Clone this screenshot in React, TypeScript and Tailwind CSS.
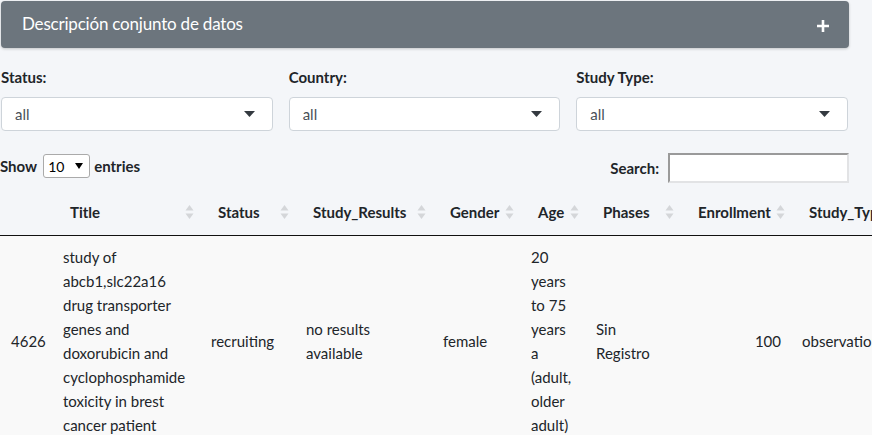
import React from 'react';

const font = { fontFamily: 'Lato, "Noto Sans", sans-serif' };

const SortIcon: React.FC = () => (
  <svg width="9" height="16" viewBox="0 0 9 16" className="absolute right-[6px] top-1/2 -translate-y-1/2">
    <path d="M4.5 1 L8.5 6.5 L0.5 6.5 Z" fill="#d4d6d9" />
    <path d="M4.5 15 L8.5 9.5 L0.5 9.5 Z" fill="#d4d6d9" />
  </svg>
);

const Caret: React.FC = () => (
  <svg width="11" height="6" viewBox="0 0 11 6">
    <path d="M0 0 L11 0 L5.5 6 Z" fill="#343a40" />
  </svg>
);

const FilterSelect: React.FC<{ label: string }> = ({ label }) => (
  <div className="flex flex-col">
    <label className="font-bold text-[15px] text-[#212529] h-[24px] leading-[24px] mb-[8px]">{label}</label>
    <div className="h-[34px] bg-white border border-[#ced4da] rounded-[4px] flex items-center justify-between pl-[13px] pr-[17px] text-[15px] text-[#495057]">
      <span>all</span>
      <Caret />
    </div>
  </div>
);

const COLUMNS = [
  { key: 'id', label: '', w: 52 },
  { key: 'title', label: 'Title', w: 148 },
  { key: 'status', label: 'Status', w: 95 },
  { key: 'results', label: 'Study_Results', w: 137 },
  { key: 'gender', label: 'Gender', w: 88 },
  { key: 'age', label: 'Age', w: 65 },
  { key: 'phases', label: 'Phases', w: 95 },
  { key: 'enroll', label: 'Enrollment', w: 111 },
  { key: 'type', label: 'Study_Type', w: 130 },
];

const Lines: React.FC<{ lines: string[] }> = ({ lines }) => (
  <>
    {lines.map((l, i) => (
      <div key={i} className="whitespace-nowrap">{l}</div>
    ))}
  </>
);

const App: React.FC = () => {
  return (
    <div className="w-[872px] h-[435px] overflow-hidden bg-[#f4f6f9] text-[#212529]" style={font}>
      <div className="w-[849px] pt-[1px]">
        {/* card header */}
        <div className="h-[47px] ml-[1px] bg-[#6c757d] rounded-[4px] shadow-[0_1px_3px_rgba(0,0,0,0.2)] flex items-center justify-between pl-[21px] pr-[20px]">
          <span className="text-white text-[17px] leading-none tracking-[-0.2px] -mt-[3px]">Descripción conjunto de datos</span>
          <svg width="12" height="12" viewBox="0 0 12 12" className="mt-[3px]">
            <path d="M6 0 V12 M0 6 H12" stroke="#fff" strokeWidth="2.6" />
          </svg>
        </div>

        {/* filters */}
        <div className="grid grid-cols-3 gap-x-[16px] mt-[17px] pr-[1px] pl-[1px]">
          <FilterSelect label="Status:" />
          <FilterSelect label="Country:" />
          <FilterSelect label="Study Type:" />
        </div>

        {/* length + search */}
        <div className="flex items-center justify-between mt-[22px] h-[30px]">
          <div className="flex items-center font-bold text-[15px] -mt-[4px]">
            <span>Show</span>
            <div className="ml-[6px] mr-[4px] w-[47px] h-[24px] bg-white border border-[#aaa] rounded-[3px] flex items-center justify-between pl-[4px] pr-[6px] font-normal text-[14px] text-black">
              <span>10</span>
              <svg width="8" height="6" viewBox="0 0 8 6"><path d="M0 0 L8 0 L4 6 Z" fill="#000" /></svg>
            </div>
            <span>entries</span>
          </div>
          <div className="flex items-center font-bold text-[15px]">
            <span className="mr-[9px]">Search:</span>
            <div className="w-[181px] h-[30px] bg-white border-2 border-[#e2e3e5] border-t-[#9a9a9a] border-l-[#9a9a9a]" />
          </div>
        </div>
      </div>

      {/* table */}
      <table className="table-fixed border-collapse mt-[6px]" style={{ width: 921 }}>
        <colgroup>
          {COLUMNS.map(c => <col key={c.key} style={{ width: c.w }} />)}
        </colgroup>
        <thead>
          <tr className="h-[46px] border-b border-[#111]">
            {COLUMNS.map(c => (
              <th key={c.key} className="relative text-left font-bold text-[15px] pl-[18px] pr-[4px] whitespace-nowrap overflow-hidden">
                {c.label}
                {c.label && c.key !== 'type' && <SortIcon />}
              </th>
            ))}
          </tr>
        </thead>
        <tbody>
          <tr className="bg-[#f9f9f9] text-[15px] leading-[24px] align-middle">
            <td className="pl-[11px] pt-[9px] pb-[9px]">4626</td>
            <td className="pl-[11px] pt-[9px] pb-[9px]">
              <Lines lines={['study of', 'abcb1,slc22a16', 'drug transporter', 'genes and', 'doxorubicin and', 'cyclophosphamide', 'toxicity in brest', 'cancer patient']} />
            </td>
            <td className="pl-[11px]">recruiting</td>
            <td className="pl-[11px]"><Lines lines={['no results', 'available']} /></td>
            <td className="pl-[11px]">female</td>
            <td className="pl-[11px]">
              <Lines lines={['20', 'years', 'to 75', 'years', 'a', '(adult,', 'older', 'adult)']} />
            </td>
            <td className="pl-[11px]"><Lines lines={['Sin', 'Registro']} /></td>
            <td className="pr-[10px] text-right">100</td>
            <td className="pl-[11px] whitespace-nowrap">observational</td>
          </tr>
        </tbody>
      </table>
    </div>
  );
};

export default App;
